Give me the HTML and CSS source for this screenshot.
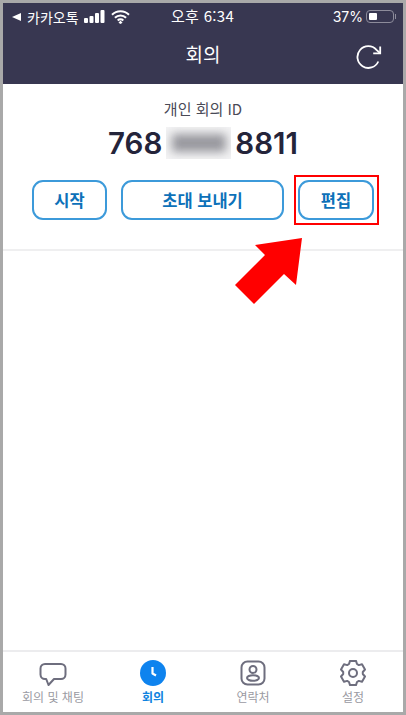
FILE: index.html
```html
<!DOCTYPE html>
<html lang="ko">

<head>
    <meta charset="UTF-8">
    <meta name="viewport" content="width=device-width, initial-scale=1.0">
    <title>회의</title>
    <link rel="stylesheet" href="styles.css">
</head>

<body>
    <div class="frame">
        <header class="header">
            <div class="status">
                <div class="status-left">
                    <span class="back-mark"></span>
                    <span>카카오톡</span>
                    <svg class="signal" width="21" height="13" viewBox="0 0 21 13">
                        <rect x="0" y="8" width="4" height="5" rx="1" />
                        <rect x="5.5" y="6" width="4" height="7" rx="1" />
                        <rect x="11" y="3" width="4" height="10" rx="1" />
                        <rect x="16.5" y="0" width="4" height="13" rx="1" />
                    </svg>
                    <svg class="wifi" width="19" height="14" viewBox="0 0 19 14">
                        <path d="M1 4.8a12 12 0 0 1 17 0M3.9 7.8a8 8 0 0 1 11.2 0M6.7 10.5a4 4 0 0 1 5.6 0" />
                        <path class="wifi-dot" d="M9.5 10.6l2 2.1-2 1.3-2-1.3z" />
                    </svg>
                </div>
                <div class="status-time">오후 6:34</div>
                <div class="status-right">
                    <span>37%</span>
                    <div class="battery"><div class="battery-level"></div></div>
                    <div class="battery-cap"></div>
                </div>
            </div>
            <div class="title-bar">
                <h1 class="title">회의</h1>
                <svg class="refresh" width="26" height="24" viewBox="0 0 26 24">
                    <path d="M22.3 16.5A10.9 10.9 0 1 1 20.5 4.8L24 8.2" />
                    <path d="M24.2 1.4V8.4H17.2" />
                </svg>
            </div>
        </header>

        <main class="meeting">
            <p class="id-label">개인 회의 ID</p>
            <div class="id-number">
                <span>768</span>
                <span class="id-hidden"><span class="id-blur"></span></span>
                <span>8811</span>
            </div>
            <div class="actions">
                <button class="btn btn-start">시작</button>
                <button class="btn btn-invite">초대 보내기</button>
                <button class="btn btn-edit">편집</button>
            </div>
            <div class="highlight"></div>
            <svg class="arrow" width="70" height="70" viewBox="0 0 70 70">
                <polygon points="67,0 61,47 49,36 19,66 0,47 30,17 20,7" />
            </svg>
        </main>

        <nav class="tabs">
            <div class="tab">
                <svg width="28" height="26" viewBox="0 0 28 26">
                    <path d="M6 4h16a4.5 4.5 0 0 1 4.5 4.5v6a4.5 4.5 0 0 1-4.5 4.5h-7l-5.5 6-2.300-6H6a4.5 4.5 0 0 1-4.5-4.5v-6A4.5 4.5 0 0 1 6 4z" />
                </svg>
                <span>회의 및 채팅</span>
            </div>
            <div class="tab tab-active">
                <svg width="28" height="26" viewBox="0 0 28 26">
                    <circle class="clock-face" cx="14" cy="13" r="13" />
                    <path class="clock-hand" d="M13.5 7v6.5l3.5 2" />
                </svg>
                <span>회의</span>
            </div>
            <div class="tab">
                <svg width="28" height="26" viewBox="0 0 28 26">
                    <rect x="2.5" y="1.5" width="23" height="23" rx="6" />
                    <circle cx="14" cy="9.5" r="3.5" />
                    <ellipse cx="14" cy="18" rx="6" ry="2.8" />
                </svg>
                <span>연락처</span>
            </div>
            <div class="tab">
                <svg width="28" height="26" viewBox="0 0 28 26">
                    <path d="M11 .9H17L18 4 19.8 5.1 23 4.3 26 9.5 23.8 12V14L26 16.5 23 21.7 19.8 20.9 18 22 17 25.1H11L10 22 8.2 20.9 5 21.7 2 16.5 4.2 14V12L2 9.5 5 4.3 8.2 5.1 10 4z" />
                    <circle cx="14" cy="13" r="4" />
                </svg>
                <span>설정</span>
            </div>
        </nav>
    </div>
</body>

</html>
```

FILE: styles.css
```css
* {
    margin: 0;
    padding: 0;
    box-sizing: border-box;
}

body {
    font-family: "Noto Sans CJK KR", "Noto Sans", sans-serif;
    background-color: #fff;
}

.frame {
    width: 406px;
    height: 715px;
    border: 3px solid #a9a9a9;
    display: flex;
    flex-direction: column;
    background-color: #fff;
}

/* cabecera */
.header {
    height: 81px;
    background-color: #383751;
    color: #fff;
}

.status {
    height: 27px;
    padding: 0 7px 0 9px;
    display: flex;
    align-items: center;
    position: relative;
    font-size: 14px;
}

.status-left {
    display: flex;
    align-items: center;
    gap: 5px;
}

.back-mark {
    width: 0;
    height: 0;
    margin-right: 1px;
    border-top: 4px solid transparent;
    border-bottom: 4px solid transparent;
    border-right: 9px solid #fff;
}

.signal {
    fill: #fff;
}

.wifi {
    margin-left: 1px;
}

.wifi path {
    fill: none;
    stroke: #fff;
    stroke-width: 2;
}

.wifi .wifi-dot {
    fill: #fff;
    stroke: none;
}

.status-time {
    position: absolute;
    left: 168px;
    top: 2px;
    font-size: 15px;
    line-height: 22px;
    letter-spacing: 0.3px;
}

.status-right {
    margin-left: auto;
    display: flex;
    align-items: center;
    font-family: Inter, sans-serif;
    font-size: 14px;
}

.battery {
    width: 28px;
    height: 13px;
    margin-left: 3px;
    padding: 2px;
    border: 1px solid #8d8c9b;
    border-radius: 4px;
}

.battery-level {
    width: 8px;
    height: 100%;
    background-color: #fff;
    border-radius: 1px;
}

.battery-cap {
    width: 1px;
    height: 5px;
    margin-left: 1px;
    background-color: #8d8c9b;
}

.title-bar {
    height: 54px;
    padding: 0 21px 0 0;
    display: flex;
    align-items: center;
    justify-content: flex-end;
    position: relative;
}

.title {
    position: absolute;
    left: 0;
    right: 0;
    top: 10px;
    text-align: center;
    font-size: 19px;
    font-weight: 400;
    line-height: 27px;
}

.refresh path {
    fill: none;
    stroke: #fff;
    stroke-width: 1.8;
}

/* contenido */
.meeting {
    flex: 1;
    position: relative;
    text-align: center;
}

.id-label {
    padding-top: 14px;
    font-size: 15px;
    line-height: 21px;
    color: #4a4a56;
}

.id-number {
    height: 36px;
    margin-top: 6px;
    display: flex;
    justify-content: center;
    align-items: center;
    gap: 4px;
    font-family: Inter, sans-serif;
    font-size: 29.5px;
    font-weight: 600;
    color: #24243a;
}

.id-hidden {
    width: 65px;
    height: 32px;
    background-color: #f3f3f4;
    overflow: hidden;
    display: flex;
    align-items: center;
    justify-content: center;
}

.id-blur {
    width: 54px;
    height: 18px;
    background-color: #98989e;
    filter: blur(5px);
}

.actions {
    margin-top: 19px;
    padding: 0 29px 29px;
    display: flex;
    justify-content: space-between;
    border-bottom: 2px solid #efeff0;
}

.btn {
    height: 40px;
    background-color: #fff;
    border: 2px solid #3c9ada;
    border-radius: 11px;
    color: #0d71b9;
    font-family: inherit;
    font-size: 16.5px;
    font-weight: 700;
}

.btn-start {
    width: 75px;
}

.btn-invite {
    width: 163px;
}

.btn-edit {
    width: 76px;
}

.highlight {
    position: absolute;
    left: 291px;
    top: 91px;
    width: 85px;
    height: 50px;
    border: 2px solid #f00;
}

.arrow {
    position: absolute;
    left: 232px;
    top: 154px;
    fill: #f00;
}

/* barra inferior */
.tabs {
    height: 62px;
    border-top: 2px solid #ececee;
    display: grid;
    grid-template-columns: repeat(4, 1fr);
}

.tab {
    padding-top: 8px;
    display: flex;
    flex-direction: column;
    align-items: center;
    font-size: 12px;
    line-height: 16px;
    color: #9a9aa2;
}

.tab span {
    margin-top: 3px;
}

.tab svg {
    fill: none;
    stroke: #6e6e7e;
    stroke-width: 2;
    stroke-linejoin: round;
}

.tab-active {
    color: #0e83e0;
    font-weight: 700;
}

.tab svg .clock-face {
    fill: #0e83ee;
    stroke: none;
}

.tab svg .clock-hand {
    stroke: #fff;
    stroke-width: 2.2;
}
```
